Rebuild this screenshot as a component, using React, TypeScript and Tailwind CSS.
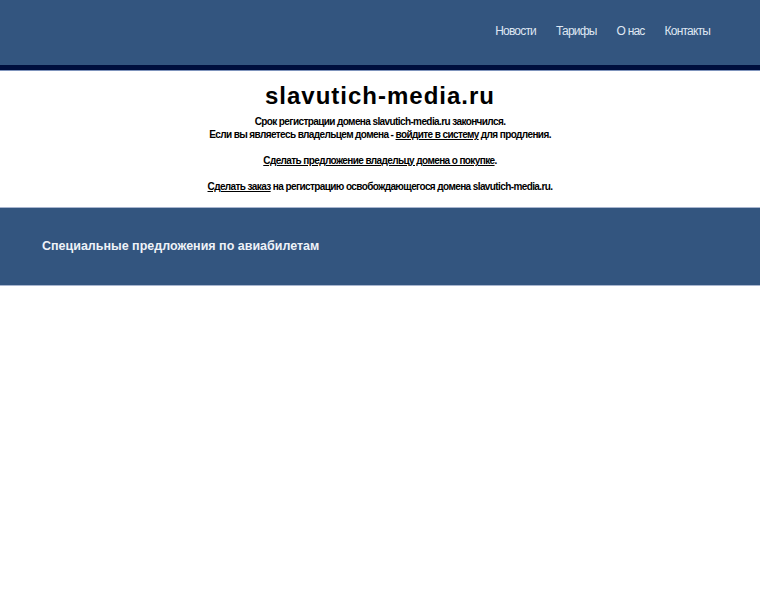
export default function App() {
  const nav = ["Новости", "Тарифы", "О нас", "Контакты"];

  return (
    <div className="min-h-screen bg-white font-['Liberation_Sans',Arial,sans-serif]">
      {/* Top bar */}
      <header>
        <div className="h-[65px] bg-[#33557f] flex items-center justify-end pr-[50px]">
          <nav className="flex items-center gap-[20px] -mt-[4px]">
            {nav.map((item) => (
              <a key={item} href="#" className="text-[12px] tracking-[-0.8px] text-[#dfe6f2] no-underline">
                {item}
              </a>
            ))}
          </nav>
        </div>
        <div className="h-[5px] bg-[#000f3d]" />
        <div className="h-[1px] bg-[#7f94bc]" />
      </header>

      {/* Domain notice */}
      <main className="text-center text-black pt-[10px] pb-[14px]">
        <h1 className="text-[24px] leading-[30px] font-bold tracking-[1px]">slavutich-media.ru</h1>
        <div className="text-[10px] leading-[13px] font-bold tracking-[-0.6px] mt-[4px]">
          <p>Срок регистрации домена slavutich-media.ru закончился.</p>
          <p>
            Если вы являетесь владельцем домена -{" "}
            <a href="#" className="underline text-black">войдите в систему</a> для продления.
          </p>
          <p className="mt-[13px]">
            <a href="#" className="underline text-black">Сделать предложение владельцу домена о покупке</a>.
          </p>
          <p className="mt-[13px]">
            <a href="#" className="underline text-black">Сделать заказ</a> на регистрацию освобождающегося домена slavutich-media.ru.
          </p>
        </div>
      </main>

      {/* Offers band */}
      <section className="border-t border-b border-[#a9b6cf] bg-[#33557f] h-[79px] flex items-center pl-[42px]">
        <h2 className="text-[12.5px] font-bold text-[#eef2f8] -mt-[1px]">Специальные предложения по авиабилетам</h2>
      </section>
    </div>
  );
}
